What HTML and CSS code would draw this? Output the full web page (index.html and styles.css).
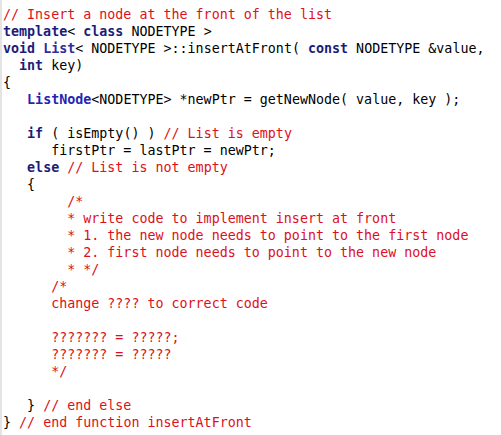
FILE: index.html
```html
<!DOCTYPE html>
<html>
<head>
<meta charset="utf-8">
<link rel="stylesheet" href="styles.css">
</head>
<body>
<div class="editor"><pre class="code"><span class="cm">// Insert a node at the front of the list</span>
<span class="kw">template</span>&lt; <span class="kw">class</span> NODETYPE &gt;
<span class="kw">void</span> <span class="ty">List</span>&lt; NODETYPE &gt;::insertAtFront( <span class="kw">const</span> NODETYPE &amp;value,
  <span class="kw">int</span> key)
{
   <span class="ty2">ListNode</span>&lt;NODETYPE&gt; *newPtr = getNewNode( value, key );

   <span class="kw">if</span> ( isEmpty() ) <span class="cm">// List is empty</span>
      firstPtr = lastPtr = newPtr;
   <span class="kw">else</span> <span class="cm">// List is not empty</span>
   {
        <span class="cm">/*</span>
<span class="cm">        * write code to implement insert at front</span>
<span class="cm">        * 1. the new node needs to point to the first node</span>
<span class="cm">        * 2. first node needs to point to the new node</span>
<span class="cm">        * */</span>
      <span class="cm">/*</span>
<span class="cm">      change ???? to correct code</span>

<span class="cm">      ??????? = ?????;</span>
<span class="cm">      ??????? = ?????</span>
<span class="cm">      */</span>

   } <span class="cm">// end else</span>
} <span class="cm">// end function insertAtFront</span></pre></div>
</body>
</html>
```

FILE: styles.css
```css
html, body {
  margin: 0;
  padding: 0;
  background: #ffffff;
}

.editor {
  width: 501px;
  height: 435px;
  box-sizing: border-box;
  border-left: 2px solid #e4e4e4;
  background: #ffffff;
  overflow: hidden;
}

.code {
  margin: 0;
  padding: 6px 0 0 1px;
  font-family: "DejaVu Sans Mono", monospace;
  font-size: 13.33px;
  line-height: 17px;
  color: #000000;
  white-space: pre;
}

.kw {
  color: #1c1c78;
  font-weight: bold;
}

.ty {
  color: #2e2e9e;
  font-weight: bold;
}

.ty2 {
  color: #2424b4;
  font-weight: bold;
}

.cm {
  color: #dc1020;
}
```
